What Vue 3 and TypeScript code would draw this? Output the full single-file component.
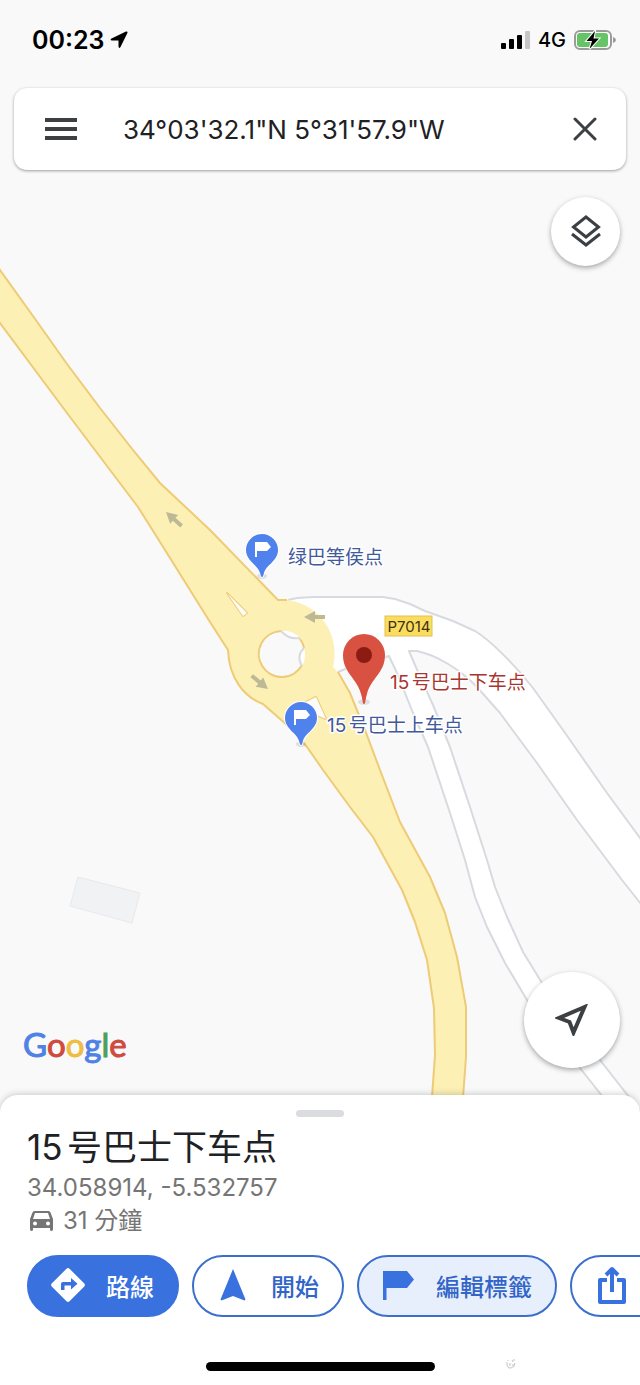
<script setup lang="ts">
import { ref } from 'vue'

const query = ref('34°03\'32.1"N 5°31\'57.9"W')

const place = {
  name: '15号巴士下车点',
  coordinates: '34.058914, -5.532757',
  duration: '31 分鐘',
}

const stops = [
  { x: 262, y: 577, label: '绿巴等侯点', labelX: 288, labelY: 564 },
  { x: 301, y: 745, label: '15号巴士上车点', labelX: 327, labelY: 732 },
]

const arrows = [
  'translate(166 512) rotate(42)',
  'translate(268 689) rotate(219)',
  'translate(304 617)',
]

const brand = [
  { letter: 'G', tone: 'blue' },
  { letter: 'o', tone: 'red' },
  { letter: 'o', tone: 'yellow' },
  { letter: 'g', tone: 'blue' },
  { letter: 'l', tone: 'green' },
  { letter: 'e', tone: 'red' },
]
</script>

<template>
  <div class="screen">
    <main class="map-area">
      <svg class="map" viewBox="0 0 640 1111" preserveAspectRatio="xMidYMin slice" role="img" aria-label="Map">
        <path class="building" d="M78 877 140 893 132 923 70 906Z" />

        <!-- minor roads -->
        <path
          class="minor-fill"
          d="M281 600 297 598 313 597H383L395 599 410 604 425 611 453 621 475 631 C490 640 514 664 533 688L563 730 607 793 640 838 660 864V928L622 880 577 820 537 763 500 713 477 687 C460 669 436 655 417 651L409 651 418 672 433 705 450 747 470 807 487 860 495 887 507 917 523 952 542 983 600 1060 640 1111H614L580 1068 527 1000 505 963 487 927 475 897 465 860 450 813 428 747 413 713 397 673 389 656 350 667 338 672 281 654Z"
        />
        <path class="minor-line" d="M288 600 297 598 313 597H383L395 599 410 604 425 611 453 621 475 631 C490 640 514 664 533 688L563 730 607 793 640 838 660 864" />
        <path class="minor-line" d="M660 928 622 880 577 820 537 763 500 713 477 687 C460 669 436 655 417 651L409 651 418 672 433 705 450 747 470 807 487 860 495 887 507 917 523 952 542 983 600 1060 640 1111" />
        <path class="minor-line" d="M614 1111 580 1068 527 1000 505 963 487 927 475 897 465 860 450 813 428 747 413 713 397 673 389 656 350 667 338 672" />

        <!-- main road with its roundabout -->
        <path
          class="major-fill"
          d="M-10 256 0 270 33 316 67 364 100 408 133 450 160 483 210 530 278 600 287 600 A53 54 0 0 1 333 667L338 672 350 693 365 730 380 770 400 822 430 877 445 913 457 957 466 1007V1057L462 1111H431L435 1055 434 1008 427 960 415 922 402 890 373 837 350 807 323 770 307 747 287 725 263 704 C244 697 229 678 228 650L210 622 160 542 138 507 110 470 67 413 0 323 -10 309Z"
        />
        <path class="major-line" d="M-10 256 0 270 33 316 67 364 100 408 133 450 160 483 210 530 278 600 287 600" />
        <path class="major-line" d="M338 672 350 693 365 730 380 770 400 822 430 877 445 913 457 957 466 1007V1057L462 1111" />
        <path class="major-line" d="M431 1111 435 1055 434 1008 427 960 415 922 402 890 373 837 350 807 323 770 307 747 287 725 263 704 C244 697 229 678 228 650L210 622 160 542 138 507 110 470 67 413 0 323 -10 309" />
        <path class="island" d="M227 593 247 613 243 616Z" />
        <path class="island" d="M304 703 316 697 326 719 314 714Z" />
        <circle class="centre" cx="282" cy="654" r="23" />
        <path class="patch" d="M281 631 A23 23 0 0 1 300 638Q289 639 281 631ZM304 648 A23 23 0 0 1 302 666Q296 656 304 648Z" />
        <path class="major-line" d="M281 631 A23 23 0 1 0 302 665M300 639Q303 643 304 648" />
        <path class="minor-line" d="M281 631Q289 640 300 638M304 648Q296 656 302 666" />

        <path v-for="arrow in arrows" :key="arrow" class="arrow" :transform="arrow" d="M0 0 11-6V-2H21V2H11V6Z" />

        <rect class="shield" x="385" y="616" width="47" height="20" />
        <text class="shield-text" x="409" y="632" text-anchor="middle">P7014</text>

        <g v-for="stop in stops" :key="stop.label">
          <g :transform="`translate(${stop.x} ${stop.y})`">
            <ellipse class="pin-shade" cx="0" cy="-1" rx="5" ry="3" />
            <path class="pin-blue" d="M0 0C-1 0-1-1-2-4C-4-12-16-16-16-27A16 16 0 0 1 16-27C16-16 4-12 2-4C1-1 1 0 0 0Z" />
            <path class="pin-flag" d="M-7-35H5L9-30 5-26H-5V-20H-7Z" />
          </g>
          <text class="label" :x="stop.labelX" :y="stop.labelY">{{ stop.label }}</text>
        </g>

        <g transform="translate(364 703)">
          <ellipse class="pin-shade" cx="0" cy="-1" rx="6" ry="3" />
          <path class="pin-red" d="M0 1C-2 1-1-3-3-9C-7-25-21-30-21-48A21 21 0 0 1 21-48C21-30 7-25 3-9C1-3 2 1 0 1Z" />
          <circle class="pin-dot" cx="0" cy="-48" r="8" />
        </g>
        <text class="label label-active" x="390" y="689">{{ place.name }}</text>
      </svg>

      <div class="overlay">
        <header class="status">
          <div class="clock">
            <span>00:23</span>
            <svg width="18" height="18" viewBox="0 0 18 18" aria-hidden="true">
              <path d="M16 .5Q18 0 17.400 2L10.500 16Q9 18 8.500 15.500V9.500H2Q-.5 9 1.500 7.500Z" />
            </svg>
          </div>
          <div class="signals">
            <svg width="30" height="18" viewBox="0 0 30 18" aria-hidden="true">
              <rect x="1" y="12" width="5" height="6" rx="1" />
              <rect x="9" y="8" width="5" height="10" rx="1" />
              <rect x="17" y="4" width="5" height="14" rx="1" />
              <rect class="bar-off" x="25" y="0" width="5" height="18" rx="1" />
            </svg>
            <span>4G</span>
            <svg width="42" height="20" viewBox="0 0 42 20" aria-hidden="true">
              <rect class="cell-frame" x="1" y="1" width="36" height="18" rx="5" />
              <path class="cell-tip" d="M39 7Q42 8 42 10T39 13Z" />
              <rect class="cell-fill" x="3" y="3" width="31" height="14" rx="3" />
              <path class="bolt" d="M21 1 12.500 11H18L15.500 19 25 8.500H19.500Z" />
            </svg>
          </div>
        </header>

        <form class="search" role="search" @submit.prevent>
          <button class="icon-button" type="button" aria-label="Menu">
            <svg width="32" height="22" viewBox="0 0 32 22" aria-hidden="true">
              <path class="menu" d="M0 2H32M0 11H32M0 20H32" />
            </svg>
          </button>
          <input v-model="query" class="query" type="text" aria-label="Search" />
          <button class="icon-button" type="button" aria-label="Clear" @click="query = ''">
            <svg width="24" height="24" viewBox="0 0 24 24" aria-hidden="true">
              <path class="stroke round" d="M2 2 22 22M22 2 2 22" />
            </svg>
          </button>
        </form>

        <button class="fab layers" type="button" aria-label="Layers">
          <svg width="32" height="36" viewBox="0 0 32 36" aria-hidden="true">
            <path class="stroke" d="M16 3 28.500 13 16 23 3.500 13ZM2 20 16 31 30 20" />
          </svg>
        </button>

        <div class="map-foot">
          <div class="brand">
            <span v-for="(part, i) in brand" :key="i" :class="part.tone">{{ part.letter }}</span>
          </div>
          <button class="fab locate" type="button" aria-label="My location">
            <svg width="34" height="32" viewBox="0 0 34 32" aria-hidden="true">
              <path class="stroke bold" d="M29.500 3 4 14 14.500 18 18.500 28.500Z" />
            </svg>
          </button>
        </div>
      </div>
    </main>

    <section class="sheet">
      <div class="handle"></div>
      <h1 class="title">{{ place.name }}</h1>
      <p class="coordinates">{{ place.coordinates }}</p>
      <p class="drive">
        <svg width="23" height="20" viewBox="0 0 23 20" aria-hidden="true">
          <path
            fill-rule="evenodd"
            d="M4.500 0H18.500Q20 0 20.500 1.500L23 8V18Q23 20 21.500 20T20 18.500V17H3V18.500Q3 20 1.500 20T0 18V8L2.500 1.500Q3 0 4.500 0ZM5 2 3 8H20L18 2ZM5 10.500A2 2 0 1 0 5 14.500A2 2 0 1 0 5 10.500ZM18 10.500A2 2 0 1 0 18 14.500A2 2 0 1 0 18 10.500Z"
          />
        </svg>
        <span>{{ place.duration }}</span>
      </p>

      <div class="actions">
        <button class="chip chip-primary" type="button">
          <svg width="34" height="34" viewBox="0 0 34 34" aria-hidden="true">
            <path
              fill-rule="evenodd"
              d="M15.500 .7Q17 -.5 18.500 .7L33.300 15.500Q34.500 17 33.300 18.500L18.500 33.300Q17 34.500 15.500 33.300L.7 18.500Q-.5 17 .7 15.500ZM20 10V14H12Q10 14 10 16V22H13.500V17.500H20V21.500L26.500 15.800Z"
            />
          </svg>
          <span>路線</span>
        </button>
        <button class="chip" type="button">
          <svg width="34" height="34" viewBox="0 0 34 34" aria-hidden="true">
            <path d="M17 1 29.500 31.500 28.500 32.500 17 28 5.500 32.500 4.500 31.500Z" />
          </svg>
          <span>開始</span>
        </button>
        <button class="chip chip-tinted" type="button">
          <svg width="34" height="34" viewBox="0 0 34 34" aria-hidden="true">
            <path d="M2 3H26L33 11.500 26 20H5.500V32H2Z" />
          </svg>
          <span>編輯標籤</span>
        </button>
        <button class="chip chip-share" type="button" aria-label="Share">
          <svg width="28" height="38" viewBox="0 0 28 38" aria-hidden="true">
            <path class="share" d="M9 14H2V36H26V14H19M14 26V4M8 9 14 3 20 9" />
          </svg>
        </button>
      </div>

      <footer class="foot">
        <div class="home-bar"></div>
        <svg class="mark" width="10" height="12" viewBox="0 0 10 12" aria-hidden="true">
          <path d="M1 4V7Q2 11 5 10Q9 9 9 5M4 5V8M6 2 7 4M8 1V3M2 2V3M6 7H8" />
        </svg>
      </footer>
    </section>
  </div>
</template>

<style>
body {
  margin: 0;
}
</style>

<style scoped>
.screen {
  display: flex;
  flex-direction: column;
  min-height: 100vh;
  overflow: hidden;
  background: #f9f9f9;
  color: #202124;
  font-family: Inter, "Noto Sans CJK SC", sans-serif;
  text-autospace: normal;
}

button {
  margin: 0;
  border: 0;
  font: inherit;
  cursor: pointer;
}

.map-area {
  position: relative;
  display: flex;
  flex: 1;
}

.map {
  position: absolute;
  inset: 0;
  width: 100%;
  height: 100%;
}

.building { fill: #f1f2f4; stroke: #e7e9ed; stroke-width: 1; }
.minor-fill { fill: #fff; }
.minor-line { fill: none; stroke: #d8dae0; stroke-width: 2; stroke-linejoin: round; }
.major-fill { fill: #fcf0b5; }
.major-line { fill: none; stroke: #eecb76; stroke-width: 2; stroke-linejoin: round; }
.island { fill: #fcfcfa; stroke: #eecb76; stroke-width: 2; stroke-linejoin: round; paint-order: stroke; }
.centre { fill: #f9f9f9; }
.patch { fill: #fff; }
.arrow { fill: #bdb994; }
.shield { fill: #fcdc5d; stroke: #dfc052; stroke-width: 1; }
.shield-text { fill: #3a3414; font-size: 15px; }
.pin-shade { fill: #777; opacity: 0.2; }
.pin-blue { fill: #4f82ec; stroke: #fff; stroke-width: 2; paint-order: stroke; }
.pin-flag { fill: #fff; }
.pin-red { fill: #d95140; stroke: #fff; stroke-width: 1; paint-order: stroke; }
.pin-dot { fill: #8c1b13; }

.label {
  fill: #42599c;
  stroke: #fff;
  stroke-width: 3;
  stroke-linejoin: round;
  paint-order: stroke;
  font-size: 19px;
}

.label-active { fill: #aa3530; }

.overlay {
  position: relative;
  display: flex;
  flex: 1;
  flex-direction: column;
}

.status {
  display: flex;
  align-items: center;
  justify-content: space-between;
  height: 80px;
  padding: 0 24px 0 32px;
  color: #000;
}

.clock,
.signals {
  display: flex;
  align-items: center;
}

.clock { gap: 6px; font-size: 25px; font-weight: 600; }
.signals { gap: 8px; font-size: 20px; font-weight: 500; }
.bar-off { fill: #c6c6c6; }
.cell-frame { fill: #fff; stroke: #9b9b9b; stroke-width: 2; }
.cell-tip { fill: #9b9b9b; }
.cell-fill { fill: #65c466; }
.bolt { fill: #000; stroke: #fff; stroke-width: 2; paint-order: stroke; }

.search {
  display: flex;
  align-items: center;
  height: 82px;
  margin: 8px 14px 0;
  padding: 0 13px 0 19px;
  box-sizing: border-box;
  border-radius: 13px;
  background: #fff;
  box-shadow: 0 1px 3px rgb(60 64 67 / 50%);
}

.icon-button {
  display: grid;
  flex: none;
  place-items: center;
  width: 56px;
  height: 56px;
  padding: 0;
  background: transparent;
}

.menu { fill: none; stroke: #3c4043; stroke-width: 4; }
.stroke { fill: none; stroke: #3c4043; stroke-width: 3; }
.round { stroke-linecap: round; }
.bold { stroke-width: 4; }

.query {
  flex: 1;
  min-width: 0;
  margin-left: 34px;
  padding: 0;
  border: 0;
  outline: 0;
  background: transparent;
  color: #202124;
  font: inherit;
  font-size: 26px;
}

.fab {
  display: grid;
  flex: none;
  place-items: center;
  padding: 0;
  border-radius: 50%;
  background: #fff;
  box-shadow: 0 2px 5px rgb(60 64 67 / 45%);
}

.layers {
  align-self: flex-end;
  width: 69px;
  height: 69px;
  margin: 27px 20px 0 0;
}

.locate {
  width: 96px;
  height: 96px;
}

.map-foot {
  display: flex;
  align-items: center;
  justify-content: space-between;
  margin-top: auto;
  padding: 0 20px 43px 23px;
}

.brand {
  margin-top: 48px;
  font-family: Lato, sans-serif;
  font-size: 33px;
  line-height: 40px;
  -webkit-text-stroke: 1px currentcolor;
}

.blue { color: #4f82e4; }
.red { color: #cf4b3f; }
.yellow { color: #efbd42; }
.green { color: #4c9f58; }

.sheet {
  position: relative;
  margin-top: -16px;
  padding: 15px 27px 14px;
  border-radius: 18px 18px 0 0;
  background: #fff;
  box-shadow: 0 -1px 6px rgb(60 64 67 / 25%);
}

.handle {
  width: 48px;
  height: 7px;
  margin: 0 auto;
  border-radius: 4px;
  background: #dadce0;
}

.title {
  margin: 8px 0 0;
  font-size: 35px;
  font-weight: 400;
  line-height: 44px;
}

.coordinates,
.drive {
  margin: 2px 0 0;
  color: #757575;
  font-size: 24px;
  line-height: 34px;
}

.drive {
  display: flex;
  align-items: center;
  gap: 10px;
  margin-top: 0;
  padding-left: 3px;
  line-height: 32px;
  font-family: Inter, "Noto Sans CJK TC", sans-serif;
}

.drive svg { fill: #757575; }

.actions {
  display: flex;
  gap: 13px;
  margin: 18px -27px 0 0;
  overflow: hidden;
}

.chip {
  display: flex;
  flex: none;
  align-items: center;
  gap: 21px;
  height: 62px;
  padding: 0 23px 2px 22px;
  border: 2px solid #3b6fcb;
  border-radius: 31px;
  background: #fff;
  color: #3265c8;
  font-family: Inter, "Noto Sans CJK TC", sans-serif;
  font-size: 24px;
  font-weight: 500;
}

.chip svg { fill: #3971df; }
.chip-primary { border-color: #3971df; background: #3971df; color: #fff; }
.chip-primary svg { fill: #fff; }
.chip-tinted { background: #e8effc; }
.chip-share { width: 152px; padding-left: 26px; }
.chip .share { fill: none; stroke: #3971df; stroke-width: 4; stroke-linejoin: round; }

.foot {
  display: grid;
  grid-template-columns: 1fr 229px 1fr;
  align-items: center;
  margin: 45px -27px 0;
}

.home-bar {
  grid-column: 2;
  height: 9px;
  border-radius: 5px;
  background: #000;
}

.mark {
  margin: -6px 0 0 71px;
  fill: none;
  stroke: #c4c4c4;
}
</style>
